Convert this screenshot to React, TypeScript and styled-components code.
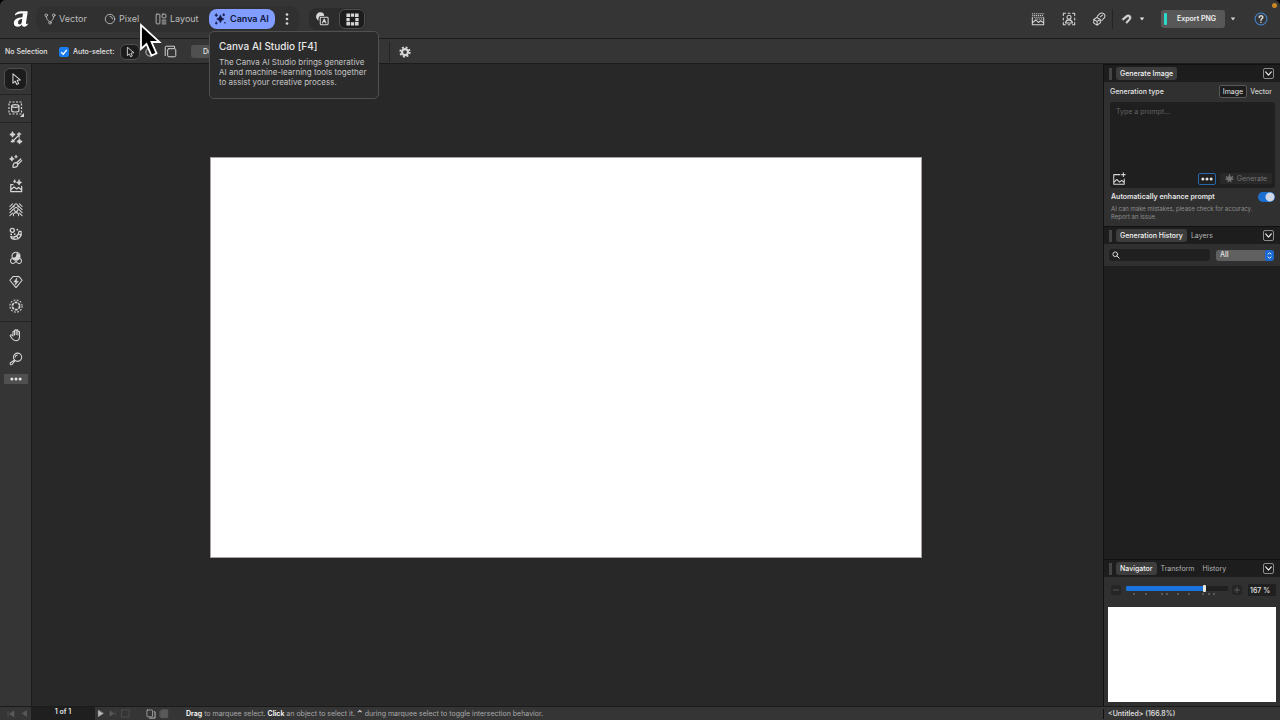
import React, { useState } from 'react';
import styled, { createGlobalStyle, css } from 'styled-components';

const GlobalStyle = createGlobalStyle`
  *, *::before, *::after { box-sizing: border-box; }
  html, body { margin: 0; background: #000; }
  body, button, input, textarea, select {
    font-family: Inter, "Liberation Sans", sans-serif;
    font-size: 7px;
    line-height: 10px;
    color: #e4e4e4;
  }
  button { margin: 0; padding: 0; border: 0; background: none; cursor: default; }
  input, textarea, select { margin: 0; outline: none; }
`;

const Glyph = styled.svg<{ $size?: number }>`
  display: block;
  flex: none;
  width: ${p => p.$size ?? 14}px;
  height: ${p => p.$size ?? 14}px;
  fill: none;
  stroke: currentColor;
  stroke-width: 1.2;
  stroke-linecap: round;
  stroke-linejoin: round;
`;

type IconProps = { size?: number; children: React.ReactNode };
const Icon = ({ size, children }: IconProps) => (
  <Glyph $size={size} viewBox="0 0 16 16" aria-hidden="true">{children}</Glyph>
);

const star = (x: number, y: number, r: number) =>
  `M${x} ${y - r}Q${x + r * 0.2} ${y - r * 0.2} ${x + r} ${y}Q${x + r * 0.2} ${y + r * 0.2} ${x} ${y + r}Q${x - r * 0.2} ${y + r * 0.2} ${x - r} ${y}Q${x - r * 0.2} ${y - r * 0.2} ${x} ${y - r}Z`;

const Star = ({ x, y, r }: { x: number; y: number; r: number }) => (
  <path d={star(x, y, r)} fill="currentColor" strokeWidth="0.7" />
);

const Window = styled.div`
  display: flex;
  flex-direction: column;
  min-height: 100vh;
  border-radius: 6px 6px 0 0;
  overflow: hidden;
  background: #282828;
`;

/* Title bar */
const TopBar = styled.header`
  position: relative;
  display: flex;
  align-items: center;
  height: 39px;
  padding-left: 13px;
  background: #353535;
  border-bottom: 1px solid #1d1d1d;
`;

const Studios = styled.nav`
  display: flex;
  align-items: center;
  height: 26px;
  margin-left: 7px;
  border-radius: 9px;
  background: #303030;
`;

const StudioButton = styled.button<{ $width: number; $active?: boolean }>`
  display: flex;
  align-items: center;
  gap: 3px;
  width: ${p => p.$width}px;
  height: 20px;
  padding-left: 8px;
  border-radius: 8px;
  font-size: 9px;
  line-height: 12px;
  color: #bcbcbc;
  ${p => p.$active && css`
    gap: 4px;
    padding-left: 5px;
    background: #819dff;
    color: #10163c;
    font-weight: 600;
  `}
`;

const IconButton = styled.button<{ $width?: number; $height?: number; $boxed?: boolean }>`
  display: flex;
  flex: none;
  align-items: center;
  justify-content: center;
  width: ${p => p.$width ?? 24}px;
  height: ${p => p.$height ?? 20}px;
  color: #d6d6d6;
  border-radius: 6px;
  ${p => p.$boxed && css`
    background: #1c1c1c;
    border: 1px solid #505050;
  `}
`;

const ModeGroup = styled.div`
  display: flex;
  align-items: center;
  gap: 5px;
  height: 22px;
  margin-left: 10px;
  padding: 0 1px;
  border-radius: 8px;
  background: #2c2c2c;
`;

const Actions = styled.div`
  display: flex;
  align-items: center;
  margin-left: auto;
`;

const Rule = styled.span`
  width: 1px;
  height: 20px;
  background: #242424;
`;

const ExportButton = styled.button`
  display: flex;
  align-items: center;
  gap: 10px;
  width: 64px;
  height: 18px;
  margin-left: 16px;
  padding-left: 3px;
  border-radius: 3px;
  background: #585858;
  color: #f0f0f0;
  font-weight: 600;
`;

const ExportMark = styled.span`
  width: 3px;
  height: 12px;
  border-radius: 1px;
  background: #2cd8c8;
`;

const RecordingDot = styled.span`
  position: absolute;
  top: 3px;
  right: 3px;
  width: 5px;
  height: 5px;
  border-radius: 50%;
  background: #c98625;
`;

const Tooltip = styled.div`
  position: absolute;
  z-index: 2;
  top: 31px;
  left: 209px;
  width: 170px;
  height: 68px;
  padding: 8px 9px;
  border: 1px solid #505050;
  border-radius: 5px;
  background: #2b2b2b;
  color: #c4c4c4;
  font-size: 8px;
  white-space: nowrap;
`;

const TooltipTitle = styled.strong`
  display: block;
  margin-bottom: 5px;
  font-size: 10px;
  line-height: 12px;
  font-weight: 500;
  color: #e8e8e8;
`;

const Pointer = styled.svg`
  position: absolute;
  z-index: 3;
  top: 22px;
  left: 138px;
  width: 26px;
  height: 36px;
`;

/* Context toolbar */
const ContextBar = styled.div`
  display: flex;
  align-items: center;
  height: 25px;
  padding: 1px 0 0 5px;
  background: #353535;
  border-bottom: 1px solid #1b1b1b;
  font-weight: 500;
`;

const SelectionLabel = styled.span`
  width: 54px;
  white-space: nowrap;
`;

const CheckLabel = styled.label`
  display: flex;
  align-items: center;
  gap: 4px;
  width: 61px;
  white-space: nowrap;
`;

const Checkbox = styled.input`
  appearance: none;
  flex: none;
  width: 10px;
  height: 10px;
  border-radius: 2px;
  background: #1a7cf0 url("data:image/svg+xml,%3Csvg xmlns='http://www.w3.org/2000/svg' viewBox='0 0 9 9'%3E%3Cpath d='M2 4.7 3.8 6.5 7 2.6' fill='none' stroke='white' stroke-width='1.2'/%3E%3C/svg%3E");
`;

const DuplicateButton = styled.button`
  width: 174px;
  height: 13px;
  margin-left: 10px;
  padding-left: 12px;
  border-radius: 3px;
  background: #505050;
  text-align: left;
  font-weight: 500;
`;

/* Workspace */
const Workspace = styled.div`
  display: flex;
  flex: 1;
`;

const Tools = styled.aside`
  width: 32px;
  flex: none;
  background: #353535;
  border-right: 1px solid #1b1b1b;
`;

const ToolGroup = styled.div<{ $height?: number; $pad?: number }>`
  display: flex;
  flex-direction: column;
  align-items: center;
  justify-content: center;
  min-height: ${p => p.$height ?? 24}px;
  padding: ${p => p.$pad ?? 3}px 0;
  & + & { border-top: 1px solid #242424; }
`;

const MoreTools = styled.button`
  display: flex;
  align-items: center;
  justify-content: center;
  width: 24px;
  height: 10px;
  margin-top: 3px;
  border-radius: 1px;
  background: #505050;
`;

const Pasteboard = styled.main`
  flex: 1;
  padding: 93px 181px 40px 178px;
  background: #282828;
`;

const Artboard = styled.div`
  width: 100%;
  aspect-ratio: 712 / 401;
  border: 1px solid #aaa1a5;
  background: #fff;
`;

/* Panels */
const Panels = styled.aside`
  display: flex;
  flex-direction: column;
  flex: none;
  width: 177px;
  border-left: 1px solid #111;
  background: #303030;
`;

const PanelHeader = styled.div`
  display: flex;
  align-items: center;
  height: 18px;
  padding: 0 6px 0 5px;
  border-top: 1px solid #111;
  background: #1d1d1d;
`;

const Grip = styled.span`
  width: 3px;
  height: 12px;
  margin-right: 4px;
  background: #454545;
`;

const Tab = styled.button<{ $active?: boolean }>`
  height: 13px;
  padding: 0 4px;
  border-radius: 3px;
  color: #b4b4b4;
  white-space: nowrap;
  ${p => p.$active && css`
    background: #3d3d3d;
    color: #f4f4f4;
    font-weight: 500;
  `}
`;

const Collapse = styled.button`
  display: flex;
  align-items: center;
  justify-content: center;
  width: 11px;
  height: 11px;
  margin-left: auto;
  border: 1px solid #8c8c8c;
  border-radius: 2px;
  color: #eee;
`;

const GenerateBody = styled.div`
  padding: 3px 5px 5px 6px;
`;

const TypeRow = styled.div`
  display: flex;
  align-items: center;
  height: 13px;
  font-weight: 500;
`;

const TypeButton = styled.button<{ $active?: boolean }>`
  width: 28px;
  height: 13px;
  border-radius: 2px;
  white-space: nowrap;
  border: 1px solid ${p => (p.$active ? '#595959' : 'transparent')};
  background: ${p => (p.$active ? '#1d1d1d' : 'transparent')};
  &:first-of-type { margin-left: auto; }
`;

const PromptBox = styled.div`
  margin-top: 4px;
  border-radius: 3px;
  background: #1f1f1f;
`;

const PromptInput = styled.textarea`
  display: block;
  width: 100%;
  height: 70px;
  padding: 5px 6px;
  border: 0;
  background: transparent;
  resize: none;
  &::placeholder { color: #626262; opacity: 1; }
`;

const PromptActions = styled.div`
  display: flex;
  align-items: center;
  gap: 4px;
  height: 16px;
  padding: 0 3px 3px 2px;
`;

const OptionsButton = styled.button`
  display: flex;
  align-items: center;
  justify-content: center;
  width: 18px;
  height: 12px;
  margin-left: auto;
  border: 1px solid #2867b0;
  border-radius: 2px;
`;

const GenerateButton = styled.button`
  display: flex;
  align-items: center;
  justify-content: center;
  gap: 3px;
  width: 52px;
  height: 11px;
  border-radius: 2px;
  background: #292929;
  color: #757575;
`;

const EnhanceRow = styled.label`
  display: flex;
  align-items: center;
  justify-content: space-between;
  height: 12px;
  margin-top: 3px;
  padding-left: 1px;
  font-weight: 600;
`;

const Switch = styled.input`
  appearance: none;
  width: 17px;
  height: 10px;
  border-radius: 5px;
  background: radial-gradient(circle at 12px 5px, #cfd6e6 4px, #1b6fd3 5px);
`;

const Disclaimer = styled.p`
  margin: 2px 0 0;
  padding-left: 1px;
  font-size: 6px;
  line-height: 8px;
  color: #8e8e8e;
  white-space: nowrap;
`;

const SearchRow = styled.div`
  display: flex;
  align-items: center;
  gap: 6px;
  height: 22px;
  padding: 0 6px 0 5px;
`;

const SearchField = styled.label`
  display: flex;
  align-items: center;
  flex: 1;
  height: 12px;
  padding-left: 3px;
  border-radius: 3px;
  background: #202020;
`;

const SearchInput = styled.input`
  width: 80px;
  padding: 0 3px;
  border: 0;
  background: transparent;
`;

const FilterSelect = styled.select`
  appearance: none;
  width: 58px;
  height: 11px;
  padding: 0 4px;
  border: 0;
  border-radius: 3px;
  font-weight: 500;
  background: #606060 url("data:image/svg+xml,%3Csvg xmlns='http://www.w3.org/2000/svg' viewBox='0 0 9 11'%3E%3Crect width='9' height='11' rx='2' fill='%231b68d2'/%3E%3Cpath d='M2.8 4.4 4.5 2.7 6.2 4.4M2.8 6.6 4.5 8.3 6.2 6.6' fill='none' stroke='white'/%3E%3C/svg%3E") right / 9px 11px no-repeat;
`;

const HistoryList = styled.div`
  flex: 1;
  background: #1f1f1f;
`;

const ZoomRow = styled.div`
  display: flex;
  align-items: center;
  height: 26px;
  padding: 0 4px 0 7px;
`;

const StepButton = styled.button`
  display: flex;
  align-items: center;
  justify-content: center;
  width: 10px;
  height: 10px;
  border-radius: 2px;
  background: #252525;
  color: #777;
`;

const SliderBox = styled.div`
  flex: 1;
  height: 10px;
  margin: 0 4px 0 5px;
`;

const ZoomSlider = styled.input`
  appearance: none;
  display: block;
  width: 100%;
  height: 7px;
  background: linear-gradient(90deg, #1b73dd 77%, #202020 77%) center / 100% 5px no-repeat;
  border-radius: 3px;
  &::-webkit-slider-thumb {
    appearance: none;
    width: 3px;
    height: 7px;
    border-radius: 1px;
    background: #e9e9df;
  }
`;

const Ticks = styled.svg`
  display: block;
  width: 100%;
  height: 3px;
  stroke: #808080;
`;

const ZoomValue = styled.input`
  width: 28px;
  height: 12px;
  margin-left: 6px;
  padding: 0 2px;
  border: 0;
  border-radius: 1px;
  background: #202020;
  font-weight: 500;
`;

const PreviewFrame = styled.div`
  padding: 4px;
`;

const Preview = styled.div`
  aspect-ratio: 168 / 95;
  background: #fff;
`;

/* Status bar */
const StatusBar = styled.footer`
  display: flex;
  align-items: center;
  height: 14px;
  border-top: 1px solid #1b1b1b;
  background: #353535;
`;

const PageButton = styled.button<{ $width: number; $dim?: boolean; $gap?: number }>`
  display: flex;
  align-items: center;
  justify-content: center;
  width: ${p => p.$width}px;
  height: 13px;
  margin-left: ${p => p.$gap ?? 0}px;
  color: ${p => (p.$dim ? '#5a5a5a' : '#b8b8b8')};
`;

const PageCount = styled.span`
  width: 64px;
  height: 13px;
  margin-left: 3px;
  background: #1f1f1f;
  text-align: center;
  font-weight: 600;
`;

const Hint = styled.p`
  flex: 1;
  margin: 0 0 0 15px;
  color: #a8a8a8;
  white-space: nowrap;
  b { color: #fff; font-weight: 600; }
`;

const DocumentLabel = styled.span`
  flex: none;
  width: 177px;
  padding-left: 4px;
  border-left: 1px solid #111;
  font-weight: 500;
`;

const ArrowShape = () => <path d="M4.5 2.2v10.6l2.6-2.3 1.8 3.8 2.2-1-1.8-3.8 3.5-.4Z" />;

const tools: { name: string; shape: React.ReactNode }[] = [
  {
    name: 'AI generate and edit',
    shape: <><path d="M4 1v12M1 4h6M11.500 1.500v12M9 3.500h5M2 12h4.500M9 12h6" strokeWidth="1.500" strokeLinecap="butt" strokeDasharray="6 2.500" /><Star x={4} y={4} r={3} /><Star x={12} y={12} r={3} /><path d="M4.500 11.500 11 5" strokeWidth="1.500" /></>,
  },
  {
    name: 'Generative brush',
    shape: <><Star x={3.300} y={4.500} r={2.700} /><Star x={8} y={2} r={1.700} /><path d="M4.500 14c0-3 .5-5.200 3-5.300 1.700 0 2.700 1 2.500 2.600-.3 2-2.400 2.900-5.500 2.700ZM9 8.500l4.500-4M10.500 10.500l4-4" strokeWidth="1.400" /></>,
  },
  {
    name: 'Expand image',
    shape: <><path d="M4.500 6.500H2v8h12.500V8.500M2.500 12l3.200-3 3 2.500 2.300-1.800 3.500 2.800" strokeWidth="1.400" /><Star x={11.500} y={4} r={3} /><Star x={6.500} y={2.800} r={1.700} /></>,
  },
  {
    name: 'Remove background',
    shape: <><path d="m1 4 3-3M1 7.500 7.500 1M1 11l4-4M15 4l-3-3M15 7.500 8.500 1M15 11l-4-4M1 14.500l3-3M15 14.500l-3-3M5 4.500 6 3.500M11 4.500 10 3.500" strokeWidth="1.200" /><circle cx="8" cy="7.500" r="2.300" /><path d="M5 14.500v-1.500c.4-1.500 1.500-2 3-2s2.600.5 3 2v1.500" /></>,
  },
  {
    name: 'Colorize',
    shape: <><circle cx="3.800" cy="3.800" r="2.300" strokeWidth="1.500" /><path d="M13.800 5c1.200 5.500-2 9.200-6.800 9.200-2.500 0-4.500-1.200-5-3.200 5 1.500 9-1 9.500-6ZM11 8l3 1.500M9 10.500l1.500 3M6 11.500l-.5 2" strokeWidth="1.400" /><path d="M6.500 8h.1M9.500 3h.1M2.500 8.500h.1" strokeWidth="2" /></>,
  },
  {
    name: 'Depth map',
    shape: <><circle cx="8" cy="6" r="4.600" /><path d="M9 3.200c1.500-.5 3 .8 3 2.800 0 2.500-1.500 4-4 4-1.500 0-3-.8-3.300-2C7.500 8.500 9.500 6 9 3.200Z" fill="currentColor" /><path d="M3.500 8.500c-2.200 1-2.500 4.500-.2 5.500 2 .8 3.700-.5 4.700-2.200 1 1.700 2.700 3 4.700 2.200 2.300-1 2-4.500-.2-5.500" /></>,
  },
  {
    name: 'Super resolution',
    shape: <><path d="M4.500 1.800h7L15 6l-7 8.500L1 6Z" /><path d="M9 3.500 5.500 8h2.200l-.5 3.500L10.700 7H8.500Z" fill="currentColor" strokeWidth=".6" /></>,
  },
  {
    name: 'Portrait lighting',
    shape: <><circle cx="8" cy="8" r="7" strokeLinecap="butt" strokeDasharray="2.100 1.565" /><circle cx="8" cy="8" r="4.200" strokeWidth="2" strokeLinecap="butt" strokeDasharray="3.400 1" /></>,
  },
];

const HandShape = () => (
  <path d="M4.500 9V4.700c0-1.300 1.700-1.300 1.800 0V8 3.200c0-1.400 1.800-1.400 1.900 0V7.500 3.200c0-1.400 1.900-1.400 1.900 0V8 4.700c0-1.300 1.900-1.300 1.900 0V10c0 2.500-1.500 4.500-4 4.500S4.500 13.500 3.500 12L1.600 9.300c-.7-1.200.7-2 1.600-1.100Z" />
);

const Dots = () => (
  <Icon size={12}><g fill="currentColor" stroke="none"><circle cx="2.500" cy="8" r="2" /><circle cx="8" cy="8" r="2" /><circle cx="13.500" cy="8" r="2" /></g></Icon>
);

const VerticalDots = () => (
  <Icon size={12}><g fill="currentColor" stroke="none"><circle cx="8" cy="2" r="1.800" /><circle cx="8" cy="8" r="1.800" /><circle cx="8" cy="14" r="1.800" /></g></Icon>
);

const Caret = () => <Icon size={6}><path d="M2 4h12L8 12Z" fill="currentColor" stroke="none" /></Icon>;

const CollapseButton = ({ panel }: { panel: string }) => (
  <Collapse aria-label={`${panel} options`}><Icon size={9}><path d="m3 5 5 6 5-6" strokeWidth="2" /></Icon></Collapse>
);

export default function App() {
  const [autoSelect, setAutoSelect] = useState(true);
  const [enhance, setEnhance] = useState(true);
  const [type, setType] = useState('Image');

  return (
    <Window>
      <GlobalStyle />
      <TopBar>
        <Glyph $size={16} viewBox="0 0 16 16" role="img" aria-label="Affinity">
          <g fill="#fff" stroke="none">
            <path d="M2 3.600C2.600 1.500 5 .2 8 .2h6.500v2.300H9.500C6.500 2.500 4.300 3 2 4.500Z" />
            <path fillRule="evenodd" d="M10 2.200h4.500l-1.500 9.500c-.2 1.300.5 1.600 2.200.8-.6 2-2 3.200-4 3.200-1.600 0-2.400-.8-2.400-2.200-1 1.500-2.300 2.200-4 2.200C2.400 15.700.8 14.300.8 12.200.8 8.500 4.300 6.300 9.400 6.200ZM9.200 7.700C6.500 8 5 9.600 5 11.500c0 1.200.6 1.900 1.500 1.900 1.200 0 2.100-1 2.400-2.700Z" />
          </g>
        </Glyph>
        <Studios aria-label="Studios">
          <StudioButton $width={60}>
            <Icon size={12}><circle cx="3" cy="3" r="1.700" /><circle cx="13" cy="3" r="1.700" /><circle cx="8" cy="13" r="1.700" /><path d="M3.200 4.800c.2 3.500 1.500 5 3.800 6.600M12.800 4.800c-.2 3.500-1.500 5-3.800 6.600" /></Icon>
            Vector
          </StudioButton>
          <StudioButton $width={51}>
            <Icon size={12}><circle cx="8" cy="8" r="6.300" /><path d="M8 4.500A3.500 3.500 0 0 1 11.500 8" /></Icon>
            Pixel
          </StudioButton>
          <StudioButton $width={62}>
            <Icon size={12}><rect x="1.500" y="1.500" width="5" height="13" rx="1" /><rect x="9.500" y="1.500" width="5" height="5" rx="1" /><path d="M9.500 9.500h5M9.500 12h5M9.500 14.500h5" /></Icon>
            Layout
          </StudioButton>
          <StudioButton $width={66} $active>
            <Icon size={12}><Star x={8.500} y={8} r={5} /><Star x={3} y={3} r={2} /><Star x={13} y={2.500} r={1.600} /><Star x={3} y={13.500} r={1.600} /><path d="M14.500 13h.1" strokeWidth="2" /></Icon>
            Canva AI
          </StudioButton>
          <IconButton aria-label="More studios"><VerticalDots /></IconButton>
        </Studios>
        <ModeGroup>
          <IconButton aria-label="Proof mode">
            <Icon><path d="M9 .8a5 5 0 1 0-5 9.200V7a3 3 0 0 1 3-2.500h3.500A5 5 0 0 0 9 .8Z" fill="currentColor" stroke="none" /><rect x="6" y="6" width="9" height="8.500" rx="1" /><path d="m8.500 12.500 2-4.500 2 4.500M9 11h3" /></Icon>
          </IconButton>
          <IconButton $width={26} $boxed aria-label="Grid view">
            <Icon size={13}><path d="M.5.5h4.500v4.500H.5ZM6 .5h4v4H6ZM11 .5h4.500v4.500H11ZM.5 6h4v4h-4ZM11.500 6h4v4h-4ZM.5 11h4.500v4.500H.5ZM6 11.500h4v4H6ZM11 11h4.500v4.500H11Z" fill="currentColor" stroke="none" /></Icon>
          </IconButton>
        </ModeGroup>
        <Actions>
          <IconButton $width={28} aria-label="Remove background">
            <Icon><path d="M1.500 7v7.500h13V7M2 12l3.500-3 3 3 2.500-2 3.500 2.500" /><path d="M1 2h14M1.500 4h13M1 6h14M5 8h9" strokeLinecap="butt" strokeDasharray="1.200 1" strokeWidth="1.300" /></Icon>
          </IconButton>
          <IconButton $width={34} aria-label="Select subject">
            <Icon><path d="M1.500 4V1.500H4M7 1.500h2M12 1.500h2.500V4M14.500 7v2M14.500 12v2.500H12M9 14.500H7M4 14.500H1.500V12M1.500 9V7" /><circle cx="8" cy="6" r="2.300" /><path d="M4 12.500c.5-2.500 2-3.500 4-3.500s3.500 1 4 3.500Z" /></Icon>
          </IconButton>
          <IconButton $width={26} aria-label="Link layers">
            <Icon><path d="m6 5 3-3.300c3.300-2 7.500 1.800 5 5L11 10M9.500 5.500l2.500-2M5.500 6.200l4 2.300v4L5.800 15 2 12.700V8.500ZM2 8.500l3.800 2.200 3.700-2.200M5.800 10.700V15" /></Icon>
          </IconButton>
          <Rule />
          <IconButton $width={26} aria-label="Snapping">
            <Icon size={13}><path d="m2.500 7.500 4.500-4C11-.2 16 4.500 12.500 8.500L8.500 13 7 11.500l4-4.500c1.200-1.500-.7-3.200-2-2L4 9Z" fill="currentColor" strokeWidth=".5" /></Icon>
          </IconButton>
          <Caret />
          <ExportButton><ExportMark />Export PNG</ExportButton>
          <IconButton $width={16} aria-label="Export options"><Caret /></IconButton>
          <IconButton $width={39} aria-label="Help">
            <Icon><circle cx="8" cy="8" r="6.800" stroke="#4384cf" /><path d="M6 6.200C6 3.500 10.200 3.600 10 6.200 9.900 7.700 8 7.600 8 9.300M8 11.700v.1" strokeWidth="1.700" /></Icon>
          </IconButton>
        </Actions>
        <RecordingDot />
        <Tooltip role="tooltip">
          <TooltipTitle>Canva AI Studio [F4]</TooltipTitle>
          The Canva AI Studio brings generative<br />AI and machine-learning tools together<br />to assist your creative process.
        </Tooltip>
        <Pointer viewBox="0 0 26 36" aria-hidden="true">
          <path d="M3 3v24l5.500-5 5 11.500 5-2.200-5-11.300h8Z" fill="#000" stroke="#fff" strokeWidth="1.800" />
        </Pointer>
      </TopBar>

      <ContextBar>
        <SelectionLabel>No Selection</SelectionLabel>
        <CheckLabel>
          <Checkbox type="checkbox" checked={autoSelect} onChange={e => setAutoSelect(e.target.checked)} />
          Auto-select:
        </CheckLabel>
        <IconButton $width={20} $height={16} $boxed aria-label="Select object"><Icon size={12}><ArrowShape /></Icon></IconButton>
        <IconButton $width={20} aria-label="Select group"><Icon size={12}><circle cx="8" cy="8" r="5.500" /></Icon></IconButton>
        <IconButton $width={21} aria-label="Select layer"><Icon size={13}><rect x="4.500" y="4.500" width="10" height="10" rx="1.500" /><path d="M1.500 13V3A1.500 1.500 0 0 1 3 1.500h10V4" /></Icon></IconButton>
        <DuplicateButton>Du</DuplicateButton>
        <IconButton $width={24} aria-label="Arrange"><VerticalDots /></IconButton>
        <Rule />
        <IconButton $width={30} aria-label="Preferences">
          <Icon size={12}><circle cx="8" cy="8" r="4" strokeWidth="3" /><circle cx="8" cy="8" r="6.300" strokeWidth="2.500" strokeLinecap="butt" strokeDasharray="2.600 2.350" /></Icon>
        </IconButton>
      </ContextBar>

      <Workspace>
        <Tools aria-label="Tools">
          <ToolGroup $height={30}>
            <IconButton $width={23} $height={22} $boxed aria-label="Move"><Icon><ArrowShape /></Icon></IconButton>
          </ToolGroup>
          <ToolGroup $height={28}>
            <IconButton aria-label="Object selection">
              <Icon size={16}><rect x="1" y="1" width="12.500" height="12" strokeLinecap="butt" strokeDasharray="2 1.500" /><ellipse cx="7.300" cy="5" rx="3.600" ry="1.300" /><path d="M3.700 5v4.700c0 1.700 7.200 1.700 7.200 0V5" /><path d="M16 12v4h-4Z" fill="currentColor" stroke="none" /></Icon>
            </IconButton>
          </ToolGroup>
          <ToolGroup>
            {tools.map(tool => (
              <IconButton key={tool.name} $height={24} aria-label={tool.name}><Icon>{tool.shape}</Icon></IconButton>
            ))}
          </ToolGroup>
          <ToolGroup $pad={1}>
            <IconButton $height={24} aria-label="Hand"><Icon><HandShape /></Icon></IconButton>
            <IconButton $height={24} aria-label="Zoom">
              <Icon><circle cx="9.800" cy="6" r="4.700" /><path d="M7 6a3 3 0 0 1 2.500-2.500M6.200 9.200 5 10.400M5.500 9.700 1.700 12.300c-1.200 1 .6 3 1.800 1.800l3-3.500Z" /></Icon>
            </IconButton>
            <MoreTools aria-label="More tools"><Dots /></MoreTools>
          </ToolGroup>
        </Tools>

        <Pasteboard><Artboard /></Pasteboard>

        <Panels>
          <PanelHeader>
            <Grip /><Tab $active>Generate Image</Tab><CollapseButton panel="Generate image" />
          </PanelHeader>
          <GenerateBody>
            <TypeRow>
              Generation type
              {['Image', 'Vector'].map(name => (
                <TypeButton key={name} $active={type === name} onClick={() => setType(name)}>{name}</TypeButton>
              ))}
            </TypeRow>
            <PromptBox>
              <PromptInput aria-label="Prompt" placeholder="Type a prompt..." />
              <PromptActions>
                <IconButton $width={14} $height={13} aria-label="Add reference image">
                  <Icon><path d="M9 3H2v11h12V8M2.500 11.500l3-3 3 3 2.500-2 3 2.500M13 1v4M11 3h4" /></Icon>
                </IconButton>
                <OptionsButton aria-label="Prompt options"><Dots /></OptionsButton>
                <GenerateButton>
                  <Icon size={9}><path d="m8 1 2 5 4-2-2 4 3 1-5 2 1 3-3-2-3 2 1-3-5-2 3-1-2-4 4 2Z" fill="currentColor" /></Icon>
                  Generate
                </GenerateButton>
              </PromptActions>
            </PromptBox>
            <EnhanceRow>
              Automatically enhance prompt
              <Switch type="checkbox" role="switch" checked={enhance} onChange={e => setEnhance(e.target.checked)} />
            </EnhanceRow>
            <Disclaimer>AI can make mistakes, please check for accuracy.<br />Report an issue.</Disclaimer>
          </GenerateBody>

          <PanelHeader>
            <Grip /><Tab $active>Generation History</Tab><Tab>Layers</Tab><CollapseButton panel="History" />
          </PanelHeader>
          <SearchRow>
            <SearchField>
              <Icon size={8}><circle cx="6.500" cy="6.500" r="4.700" strokeWidth="1.800" /><path d="m10 10 4.500 4.500" strokeWidth="2" /></Icon>
              <SearchInput type="text" aria-label="Search history" />
            </SearchField>
            <FilterSelect aria-label="Filter"><option>All</option></FilterSelect>
          </SearchRow>
          <HistoryList />

          <PanelHeader>
            <Grip /><Tab $active>Navigator</Tab><Tab>Transform</Tab><Tab>History</Tab><CollapseButton panel="Navigator" />
          </PanelHeader>
          <ZoomRow>
            <StepButton aria-label="Zoom out"><Icon size={8}><path d="M3 8h10" /></Icon></StepButton>
            <SliderBox>
              <ZoomSlider type="range" aria-label="Zoom" min={0} max={100} defaultValue={78} />
              <Ticks viewBox="0 0 102 3" preserveAspectRatio="none"><path d="M8 1v2M20 1v2M36 1v2M41 1v2M52 1v2M63 1v2M77 1v2M83 1v2M88 1v2" /></Ticks>
            </SliderBox>
            <StepButton aria-label="Zoom in"><Icon size={8}><path d="M3 8h10M8 3v10" /></Icon></StepButton>
            <ZoomValue aria-label="Zoom level" defaultValue="167 %" />
          </ZoomRow>
          <PreviewFrame><Preview /></PreviewFrame>
        </Panels>
      </Workspace>

      <StatusBar>
        <PageButton $width={21} $dim aria-label="First page"><Icon size={8}><path d="M14 2v12L5 8ZM2 2v12" fill="currentColor" /></Icon></PageButton>
        <PageButton $width={7} $dim aria-label="Previous page"><Icon size={7}><path d="M13 1v14L3 8Z" fill="currentColor" /></Icon></PageButton>
        <PageCount>1 of 1</PageCount>
        <PageButton $width={10} aria-label="Next page"><Icon size={7}><path d="M3 1v14l11-7Z" fill="currentColor" /></Icon></PageButton>
        <PageButton $width={14} $dim aria-label="Last page"><Icon size={7}><path d="M2 2v12l9-6ZM14 2v12" fill="currentColor" /></Icon></PageButton>
        <PageButton $width={12} $dim aria-label="Add page"><Icon size={9}><rect x="1.500" y="1.500" width="13" height="13" /></Icon></PageButton>
        <PageButton $width={12} $gap={14} aria-label="Copy"><Icon size={10}><rect x="1.500" y="1.500" width="9" height="11" rx="1" /><path d="M13 4.500h1.500v10h-9" strokeWidth="1.600" /></Icon></PageButton>
        <PageButton $width={14} $dim aria-label="Paste"><Icon size={10}><path d="M2 3h8v10H2ZM5 1h9v13H5Z" fill="currentColor" /></Icon></PageButton>
        <Hint><b>Drag</b> to marquee select. <b>Click</b> an object to select it. <b>⌃</b> during marquee select to toggle intersection behavior.</Hint>
        <DocumentLabel>&lt;Untitled&gt; (166.8%)</DocumentLabel>
      </StatusBar>
    </Window>
  );
}
